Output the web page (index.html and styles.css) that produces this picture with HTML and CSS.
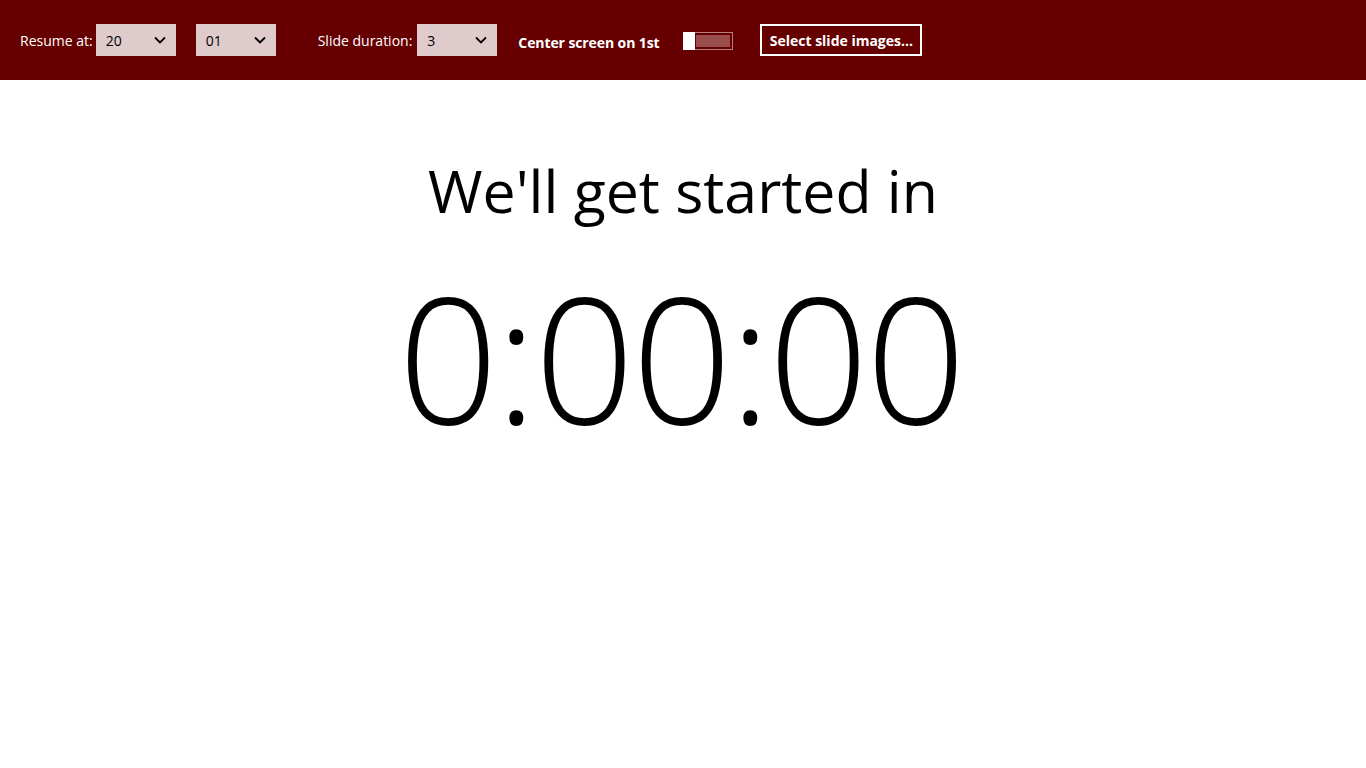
FILE: index.html
```html
<!DOCTYPE html>
<html>
<head>
<meta charset="utf-8">
<link rel="stylesheet" href="styles.css">
</head>
<body>
<header class="bar">
  <span class="label">Resume at:</span>
  <div class="select"><span>20</span><svg class="chev" viewBox="0 0 12 8"><path d="M1 1.5 L6 6.5 L11 1.5" fill="none" stroke="#000" stroke-width="1.8"/></svg></div>
  <div class="select second"><span>01</span><svg class="chev" viewBox="0 0 12 8"><path d="M1 1.5 L6 6.5 L11 1.5" fill="none" stroke="#000" stroke-width="1.8"/></svg></div>
  <span class="label slide">Slide duration:</span>
  <div class="select"><span>3</span><svg class="chev" viewBox="0 0 12 8"><path d="M1 1.5 L6 6.5 L11 1.5" fill="none" stroke="#000" stroke-width="1.8"/></svg></div>
  <span class="bold-label">Center screen on 1st</span>
  <div class="toggle"><div class="thumb"></div><div class="track"></div></div>
  <div class="button">Select slide images...</div>
</header>
<main class="content">
  <h1 class="title">We'll get started in</h1>
  <div class="timer">0:00:00</div>
</main>
</body>
</html>
```
FILE: styles.css
```css
html, body { margin: 0; padding: 0; background: #fff; }
body { font-family: "Open Sans", "Noto Sans", sans-serif; color: #000; }
.bar {
  height: 80px;
  background: #660000;
  display: flex;
  align-items: center;
  padding-left: 20px;
  box-sizing: border-box;
  color: #fff;
}
.label { font-size: 14px; margin-right: 3px; }
.label.slide { margin-left: 42px; margin-right: 5px; }
.select {
  width: 80px; height: 32px;
  background: #dfcbcc;
  box-sizing: border-box;
  display: flex; align-items: center; justify-content: space-between;
  padding: 0 10px 0 10px;
  color: #000; font-size: 14px;
}
.select.second { margin-left: 20px; }
.chev { width: 12px; height: 8px; }
.bold-label { font-size: 14px; font-weight: 700; margin-left: 21px; width: 140px; white-space: nowrap; letter-spacing: -0.1px; position: relative; top: 2px; }
.toggle {
  margin-left: 25px; width: 50px; height: 18px; position: relative; top: 1px;
  border: 1px solid #b77f7f; box-sizing: border-box; background: #660000;
}
.toggle .track { position: absolute; left: 12px; right: 2px; top: 2px; bottom: 2px; background: #9a4d4d; }
.toggle .thumb { position: absolute; left: -1px; top: -1px; width: 12px; height: 18px; background: #fff; z-index: 1; }
.button {
  margin-left: 27px; height: 32px; width: 162px; box-sizing: border-box;
  border: 2px solid #fff; display: flex; align-items: center; justify-content: center;
  font-size: 14px; font-weight: 700;
}
.content { display: flex; flex-direction: column; align-items: center; }
.title { margin: 70px 0 0 0; font-weight: 400; font-size: 59px; line-height: 80px; }
.timer { margin-top: 26px; font-weight: 300; font-size: 176px; line-height: 200px; letter-spacing: -3px; padding-right: 5px; }
```
